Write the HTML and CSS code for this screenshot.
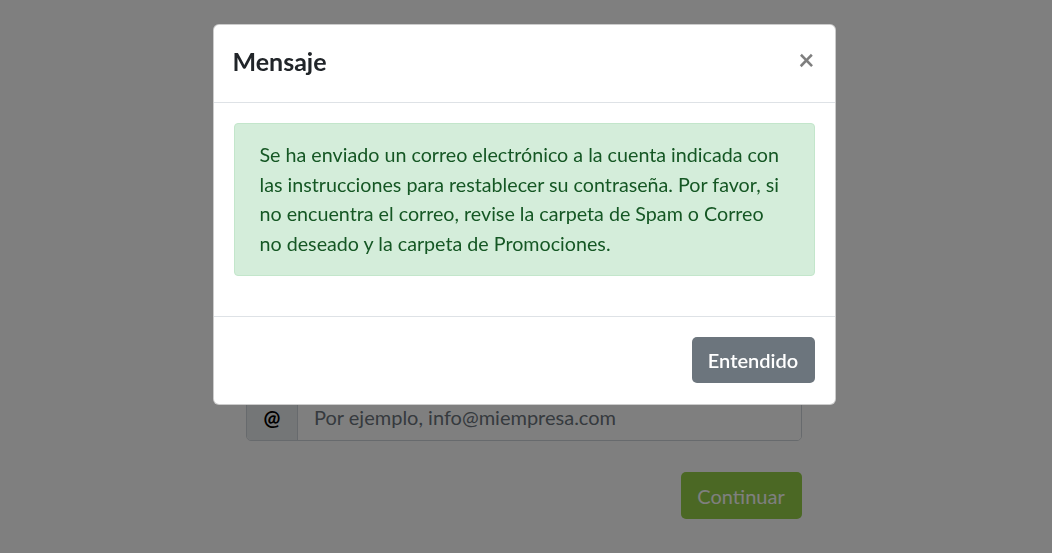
FILE: index.html
```html
<!DOCTYPE html>
<html lang="es">
<head>
<meta charset="utf-8">
<title>Mensaje</title>
<link rel="stylesheet" href="styles.css">
</head>
<body>
<main class="page">
  <div class="form">
    <div class="input-group">
      <span class="input-addon">@</span>
      <input class="input" type="text" placeholder="Por ejemplo, info@miempresa.com">
    </div>
    <div class="actions">
      <button class="btn btn-green">Continuar</button>
    </div>
  </div>
</main>
<div class="backdrop"></div>
<div class="modal-wrap">
  <div class="modal">
    <div class="modal-header">
      <h5 class="modal-title">Mensaje</h5>
      <button class="close">×</button>
    </div>
    <div class="modal-body">
      <div class="alert">Se ha enviado un correo electrónico a la cuenta indicada con las instrucciones para restablecer su contraseña. Por favor, si no encuentra el correo, revise la carpeta de Spam o Correo no deseado y la carpeta de Promociones.</div>
    </div>
    <div class="modal-footer">
      <button class="btn btn-gray">Entendido</button>
    </div>
  </div>
</div>
</body>
</html>
```

FILE: styles.css
```css
* { box-sizing: border-box; }
html, body { margin: 0; padding: 0; }
body {
  font-family: Lato, "Open Sans", sans-serif;
  background: #fff;
  color: #212529;
  width: 1052px;
  height: 553px;
  overflow: hidden;
}
.page {
  display: flex;
  justify-content: center;
  padding-top: 393px;
  padding-right: 4px;
}
.form { width: 556px; }
.input-group {
  display: flex;
  height: 48px;
  border: 1px solid #ced4da;
  border-radius: 5px;
  overflow: hidden;
}
.input-addon {
  width: 51px;
  background: #e9ecef;
  border-right: 1px solid #ced4da;
  display: flex;
  align-items: center;
  justify-content: center;
  font-weight: 700;
  font-size: 20px;
  color: #000;
}
.input {
  flex: 1;
  border: 0;
  padding: 0 16px;
  font-family: inherit;
  font-size: 20px;
  color: #495057;
  background: #fff;
}
.input::placeholder { color: #6c757d; }
.actions {
  display: flex;
  justify-content: flex-end;
  margin-top: 31px;
}
.btn {
  font-family: inherit;
  font-size: 20px;
  border: 0;
  border-radius: 5px;
  color: #fff;
  padding: 0 16px;
  height: 47px;
}
.btn-green { background: #96d148; color: #fff; width: 121px; padding-left: 15px; }
.backdrop {
  position: fixed;
  inset: 0;
  background: rgba(0,0,0,0.5);
}
.modal-wrap {
  position: fixed;
  inset: 0;
  display: flex;
  justify-content: center;
  align-items: flex-start;
  padding-top: 24px;
  padding-right: 4px;
}
.modal {
  width: 623px;
  background: #fff;
  border-radius: 6px;
  border: 1px solid rgba(0,0,0,.2);
  display: flex;
  flex-direction: column;
}
.modal-header {
  display: flex;
  align-items: center;
  justify-content: space-between;
  height: 78px;
  padding: 0 20px 5px 19px;
  border-bottom: 1px solid #dee2e6;
}
.modal-title {
  margin: 0;
  font-size: 25px;
  font-weight: 700;
  color: #212529;
}
.close {
  background: none;
  border: 0;
  padding: 0;
  font-family: inherit;
  font-size: 28px;
  font-weight: 700;
  line-height: 1;
  color: #000;
  opacity: .5;
  margin-top: -5px;
}
.modal-body {
  padding: 20px 20px 40px;
}
.alert {
  background: #d4edda;
  border: 1px solid #c3e6cb;
  border-radius: 4px;
  color: #155724;
  font-size: 19.7px;
  line-height: 29.7px;
  padding: 16px 25px;
}
.modal-footer {
  display: flex;
  justify-content: flex-end;
  border-top: 1px solid #dee2e6;
  padding: 20px 20px 21px;
}
.btn-gray {
  background: #6c757d;
  height: 46px;
  width: 123px;
  font-weight: 600;
}
```
